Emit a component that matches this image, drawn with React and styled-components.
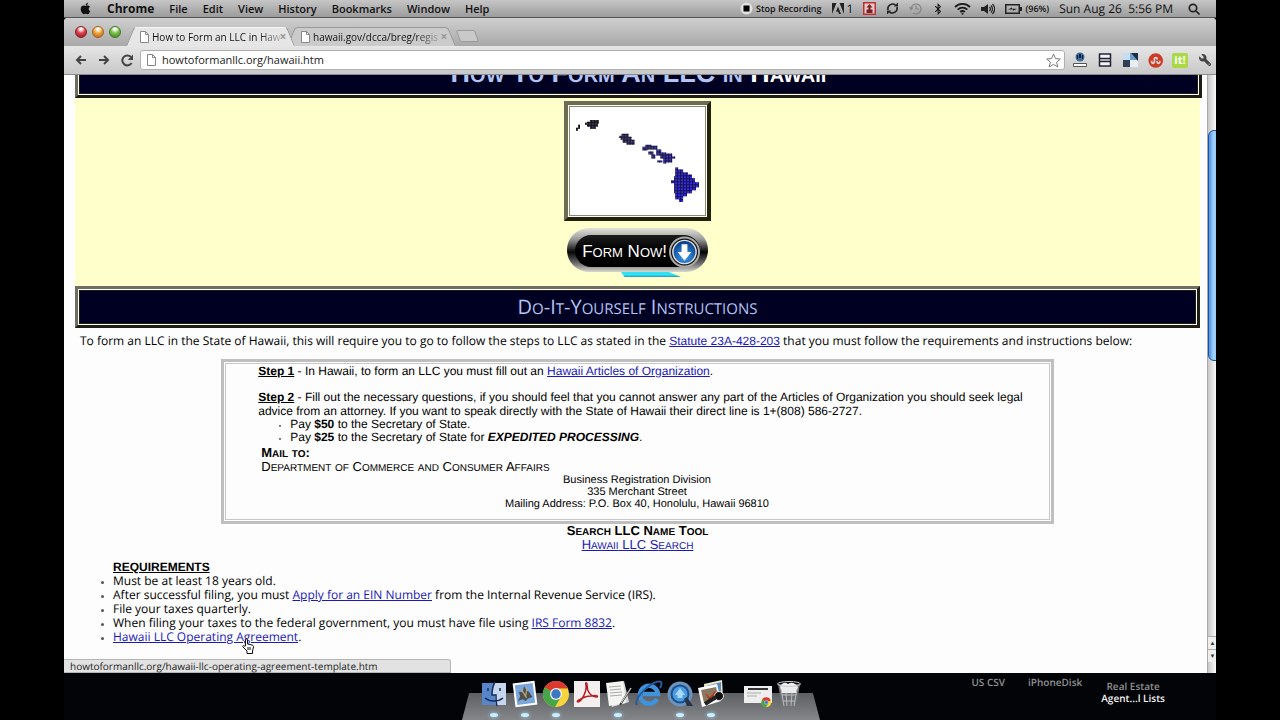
import React from 'react'
import styled, { createGlobalStyle } from 'styled-components'
import { FaApple, FaBluetoothB, FaStumbleuponCircle } from 'react-icons/fa'
import { FaWrench } from 'react-icons/fa6'

const SYSTEM_FONT = `'Open Sans', 'Noto Sans', sans-serif`
const PAGE_FONT = `'Open Sans', 'Noto Sans', sans-serif`
const ARIAL = `'Liberation Sans', Arial, sans-serif`

const GlobalStyle = createGlobalStyle`
    * { box-sizing: border-box; }
    body {
        margin: 0;
        background: #000;
        font-family: ${SYSTEM_FONT};
        font-size: 12px;
        text-rendering: geometricPrecision;
        overflow: hidden;
    }
    button, input { font: inherit; border: 0; background: none; padding: 0; color: inherit; }
    ul { margin: 0; padding: 0; }
    svg { display: block; flex-shrink: 0; }
`

const Screen = styled.div`
    display: flex;
    flex-direction: column;
    min-height: 100vh;
    margin: 0 5%;
`

/* ---- system menu bar ---- */

const MenuBar = styled.header`
    display: flex;
    align-items: center;
    justify-content: space-between;
    height: 18px;
    padding: 0 16px 0 15px;
    background: linear-gradient(#c6c6c6, #9c9c9c);
    border-bottom: 1px solid #555;
    color: #111;
`

const MenuList = styled.nav`
    display: flex;
    align-items: center;
    gap: 15px;
`

const MenuItem = styled.button`
    font-size: ${p => p.$bold ? 12 : 11}px;
    line-height: 16px;
    font-weight: ${p => p.$bold ? 700 : 600};
`

const StatusArea = styled.div`
    display: flex;
    align-items: center;
    gap: 10px;
`

const StatusItem = styled.div`
    display: flex;
    align-items: center;
    gap: 3px;
    font-size: ${p => p.$small ? 9 : 12}px;
    font-weight: ${p => p.$small ? 600 : 500};
    line-height: 16px;
    white-space: pre;
    &:last-child { margin-left: 5px; }
`

/* ---- browser window ---- */

const Window = styled.main`
    position: relative;
    display: flex;
    flex-direction: column;
    border-radius: 4px 4px 0 0;
    overflow: hidden;
    background: #fdfdfd;
`

const TabStrip = styled.div`
    display: flex;
    align-items: flex-end;
    height: 28px;
    padding-left: 11px;
    background: linear-gradient(#cfcfcf, #a9a9a9);
`

const Lights = styled.div`
    display: flex;
    gap: 5px;
    align-self: center;
    margin-right: 13px;
`

const Light = styled.button`
    width: 12px;
    height: 12px;
    border-radius: 50%;
    border: 1px solid ${p => p.$edge};
    background: radial-gradient(circle at 50% 20%, #fff 0 10%, ${p => p.$color} 45%, ${p => p.$edge});
`

const TabShell = styled.div`
    position: relative;
    z-index: ${p => p.$active ? 2 : 1};
    display: flex;
    align-items: center;
    width: 155px;
    height: 19px;
    margin-right: 6px;
    padding-left: 6px;
    &::before, &::after {
        content: '';
        position: absolute;
        z-index: -1;
        top: 0;
        bottom: 0;
        width: 60%;
        background: ${p => p.$active ? '#e6e6e6' : '#cbcbcb'};
        border-top: 1px solid ${p => p.$active ? '#f5f5f5' : '#999'};
    }
    &::before { left: -4px; transform: skewX(-22deg); border-left: 1px solid #8f8f8f; border-radius: 4px 0 0 0; }
    &::after { right: -2px; transform: skewX(22deg); border-right: 1px solid #8f8f8f; border-radius: 0 4px 0 0; }
`

const TabButton = styled.button`
    display: flex;
    align-items: center;
    gap: 3px;
    flex: 1;
    min-width: 0;
    text-align: left;
`

const TabTitle = styled.span`
    flex: 1;
    font-size: 10px;
    font-weight: 500;
    line-height: 16px;
    color: #111;
    white-space: nowrap;
    mask-image: linear-gradient(to right, #000 82%, rgba(0, 0, 0, .2));
`

const CloseButton = styled.button`
    flex: 0 0 12px;
    font-size: 12px;
    font-weight: 700;
    line-height: 12px;
    color: #999;
`

const NewTab = styled.button`
    width: 19px;
    height: 12px;
    margin: 0 0 4px 2px;
    border: 1px solid #9a9a9a;
    border-radius: 2px;
    background: #c9c9c9;
    transform: skewX(20deg);
`

const Toolbar = styled.div`
    display: flex;
    align-items: center;
    gap: 7px;
    height: 29px;
    padding: 0 3px 0 9px;
    background: linear-gradient(#e6e6e6, #c8c8c8);
    border-bottom: 1px solid #8c8c8c;
`

const IconButton = styled.button`
    display: flex;
    align-items: center;
    justify-content: center;
    width: 16px;
    height: 16px;
    color: #444;
`

const Omnibox = styled.label`
    display: flex;
    align-items: center;
    flex: 1;
    gap: 6px;
    height: 20px;
    margin-left: -2px;
    padding: 0 3px 0 6px;
    border: 1px solid #b0b0b0;
    border-radius: 3px;
    background: #fff;
`

const Address = styled.input`
    flex: 1;
    min-width: 0;
    font-size: 11px;
    font-weight: 500;
    line-height: 16px;
    color: #222;
    outline: none;
`

const Extensions = styled.div`
    display: flex;
    gap: 9px;
`

const Viewport = styled.div`
    display: flex;
`

/* ---- document ---- */

const Document = styled.article`
    flex: 1;
    padding: 0 7px 29px 11px;
    background: #fdfdfd;
    color: #000;
    font-family: ${PAGE_FONT};
`

const Banner = styled.div`
    display: flex;
    border: 3px solid;
    border-color: #6d6d63 #1d1d16 #1d1d16 #6d6d63;
    background: #fffff0;
    padding: 1px;
`

const BannerFill = styled.div`
    flex: 1;
    border: 1px solid #1d1d16;
    background: #000022;
    color: #b3c4f3;
    text-align: center;
`

const ScrolledBanner = styled.div`
    display: flex;
    flex-direction: column;
    justify-content: flex-end;
    height: 23px;
    margin-right: -2px;
    overflow: hidden;
`

const PageTitle = styled.h1`
    margin: 0;
    font-family: ${ARIAL};
    line-height: 36px;
    font-weight: 700;
    b { color: #fff; }
`

const SectionTitle = styled.h2`
    margin: 0;
    font-size: 20px;
    line-height: 32px;
    font-weight: 400;
`

/* small caps whose small letters are a size of their own */
const CapsText = styled.span`
    font-size: ${p => p.$big}px;
    text-transform: uppercase;
`

const SmallLetters = styled.span`
    font-size: ${p => p.$size}px;
    line-height: 1;
`

const SmallCaps = ({ big, small, children }) => (
    <CapsText $big={big}>
        {children.split(/([a-z]+)/).filter(Boolean).map((part, i) => (
            /[a-z]/.test(part) ? <SmallLetters key={i} $size={small}>{part}</SmallLetters> : part
        ))}
    </CapsText>
)

const Hero = styled.section`
    display: flex;
    flex-direction: column;
    align-items: center;
    gap: 7px;
    padding: 3px 0 8px;
    background: #ffffcb;
`

const MapFrame = styled.div`
    border: 4px solid;
    border-color: #6d6d55 #22220f #22220f #6d6d55;
    background: #fffff0;
    padding: 1px;
    svg { border: 1px solid #8a8a78; background: #fff; }
`

const FormNow = styled.button`
    position: relative;
    display: flex;
    align-items: center;
    justify-content: flex-end;
    gap: 2px;
    width: 141px;
    height: 44px;
    margin-bottom: 6px;
    padding: 3px 8px 0;
    border-radius: 22px;
    background: linear-gradient(#e4e4dc, #9b9b9b 25%, #050505 55%, #6a6a6a 80%, #d8d8d0);
    color: #fff;
    font-family: ${ARIAL};
    line-height: 24px;
    white-space: nowrap;
    > span { z-index: 1; }
    svg { z-index: 1; }
    &::before {
        content: '';
        position: absolute;
        inset: 7px 8px 5px;
        border-radius: 16px;
        background: linear-gradient(#1c1c1c, #000 50%);
    }
    &::after {
        content: '';
        position: absolute;
        left: 54px;
        top: 44px;
        width: 60px;
        height: 5px;
        background: linear-gradient(#31e2f7 60%, #2a8fb0);
        clip-path: polygon(0 0, 80% 0, 100% 100%, 6% 100%);
    }
`

const Link = styled.a`
    color: #1a1ab4;
    text-decoration: underline;
    ${p => p.$arial ? `font-family: ${ARIAL};` : ''}
`

const Intro = styled.p`
    margin: 5px 5px 10px;
    font-size: 12px;
    line-height: 16px;
`

const StepsBox = styled.section`
    width: 74%;
    margin: 0 auto;
    padding: 1px;
    border: 3px solid #bfbfbf;
`

const StepsInner = styled.div`
    padding: 0 33px 9px 32px;
    border: 1px solid #c8c8c8;
    font-family: ${ARIAL};
    font-size: 12px;
    line-height: 14px;
`

const Step = styled.p`
    margin: 0 -20px 12px 0;
    &:last-of-type { margin-bottom: 0; }
`

const StepName = styled.strong`
    text-decoration: underline;
`

const PayList = styled.ul`
    padding-left: 32px;
    margin-bottom: 2px;
    line-height: 13px;
    li::marker { font-size: 8px; color: #555; }
`

const MailTo = styled.div`
    padding-left: 3px;
`

const MailAddress = styled.address`
    font-style: normal;
    font-size: 11px;
    line-height: 12px;
    text-align: center;
`

const SearchTool = styled.section`
    font-family: ${ARIAL};
    font-size: 13px;
    line-height: 14px;
    text-align: center;
`

const Requirements = styled.section`
    padding: 8px 0 0 38px;
    font-size: 12px;
    line-height: 14px;
    h3 {
        margin: 0;
        font-family: ${ARIAL};
        font-size: 12px;
        text-decoration: underline;
    }
    li::marker { font-size: 8px; color: #555; }
`

const ScrollTrack = styled.div`
    display: flex;
    flex-direction: column;
    width: 9px;
    overflow: hidden;
    border-left: 1px solid #aaa;
    background: linear-gradient(to right, #c8c8c8, #fafafa);
`

const ScrollThumb = styled.div`
    flex: 0 0 231px;
    width: 14px;
    margin-top: 55px;
    border: 1px solid #1c4f9f;
    border-radius: 6px;
    background: linear-gradient(to right, #4f94e0, #a5d3fb 40%, #6eb2f2);
`

const ScrollArrows = styled.div`
    margin-top: auto;
    margin-bottom: 11px;
    background: #eee;
`

const ScrollArrow = styled.button`
    display: block;
    width: 9px;
    height: 13px;
    border-top: 1px solid #aaa;
    font-size: 6px;
    line-height: 12px;
    color: #333;
`

const StatusBubble = styled.div`
    position: absolute;
    left: 0;
    bottom: 0;
    width: 387px;
    height: 14px;
    padding-left: 6px;
    border: 1px solid #b5b5b5;
    border-left: 0;
    border-radius: 0 3px 0 0;
    background: #e2e2e2;
    color: #222;
    font-size: 10px;
    font-weight: 400;
    line-height: 12px;
`

const Pointer = styled.svg`
    position: absolute;
    left: 178px;
    bottom: 19px;
`

/* ---- dock and desktop ---- */

const Desktop = styled.footer`
    position: relative;
    flex: 1;
    min-height: 47px;
    background: #020407;
    overflow: hidden;
`

const Dock = styled.div`
    display: flex;
    align-items: flex-start;
    justify-content: center;
    width: 358px;
    height: 47px;
    margin-left: 398px;
    padding-top: 7px;
    background: linear-gradient(#5d5f62, #85878a) 0 20px / 100% 27px no-repeat;
    clip-path: polygon(0 0, 100% 0, 98% 42%, 100% 100%, 0 100%, 2% 42%);
`

const DockItem = styled.button`
    display: flex;
    flex-direction: column;
    align-items: center;
    width: 31px;
    margin-left: ${p => p.$gap ? 16 : 0}px;
    height: 40px;
    &::after {
        content: '';
        width: 8px;
        height: 4px;
        margin-top: 5px;
        border-radius: 50%;
        background: ${p => p.$running ? '#c9efff' : 'transparent'};
        box-shadow: ${p => p.$running ? '0 0 4px #a5dcfa' : 'none'};
    }
`

const DesktopLabels = styled.div`
    position: absolute;
    top: 3px;
    right: 51px;
    display: flex;
    gap: 23px;
`

const DesktopLabel = styled.div`
    padding-top: ${p => p.$low ? 4 : 0}px;
    margin-left: ${p => p.$low ? -4 : 0}px;
    color: #8f8f8f;
    font-size: 10px;
    font-weight: 600;
    line-height: 12px;
    text-align: center;
    b { color: #f2f2f2; font-weight: 600; }
`

/* ---- drawings ---- */

const PageIcon = () => (
    <svg width="9" height="12" viewBox="0 0 9 12" fill="#fff" stroke="#888">
        <path d="M.5.5h5l3 3v8h-8z" /><path d="M5.5.5v3h3" fill="none" />
    </svg>
)

const IslandMap = () => (
    <svg width="137" height="110" viewBox="0 0 136 109">
        <defs>
            <linearGradient id="sea" gradientUnits="userSpaceOnUse" x1="20" y1="10" x2="118" y2="82">
                <stop offset="0" stopColor="#333" />
                <stop offset=".5" stopColor="#4a4488" />
                <stop offset="1" stopColor="#352be8" />
            </linearGradient>
            <pattern id="grid" width="3" height="3" patternUnits="userSpaceOnUse">
                <path d="M0 .5h3M.5 0v3" stroke="#07071c" strokeWidth="1" opacity=".75" />
            </pattern>
        </defs>
        {['url(#sea)', 'url(#grid)'].map(fill => (
            <g key={fill} fill={fill}>
                <path d="M17 15h3v-2h9v4h-1v3h-2v2h-6v-2h-3v-2h-2v-2h2z" />
                <path d="M8 18h2v4h-2v2h-2v-3h2z" />
                <path d="M50 29h2v-2h7v3h3v3h3v5h-8v-2h-4v-3h-2v-2h-2z" />
                <path d="M73 40h3v-2h6v1h6v4h-10v1h-5z" />
                <path d="M79 45h5v3h2v4h-4v-4h-3z" />
                <path d="M87 43h5v3h5v1h6v3h3v2h-3v4h-6v1h-3v-5h-3v-3h-4z" />
                <path d="M88 54h5v2h-5z" />
                <path d="M106 61h3v2h5v3h5v2h4v4h3v4h4v5h-3v3h-4v3h-5v3h-4v6h-4v-3h-4v-6h-1v-10h-3v-3h3v-4h1z" />
            </g>
        ))}
    </svg>
)

const DownArrow = () => (
    <svg width="31" height="32" viewBox="0 0 32 32">
        <defs>
            <radialGradient id="ball" cx=".5" cy=".7" r=".7">
                <stop offset="0" stopColor="#3ba0f0" /><stop offset="1" stopColor="#07377f" />
            </radialGradient>
        </defs>
        <circle cx="16" cy="16" r="15" fill="#111" stroke="#aaa" strokeWidth="2" />
        <circle cx="16" cy="16" r="12" fill="url(#ball)" stroke="#e0e0e0" strokeWidth="1.5" />
        <path d="M13 8h6v8h4l-7 9-7-9h4z" fill="#fff" />
    </svg>
)

const ArrowIcon = ({ flip }) => (
    <svg width="12" height="12" viewBox="0 0 12 12" fill="none" stroke="#444" strokeWidth="2">
        <path d={flip ? 'M1 6h9M6 2l4 4-4 4' : 'M11 6H2M6 2L2 6l4 4'} />
    </svg>
)

const ReloadIcon = () => (
    <svg width="13" height="13" viewBox="0 0 13 13">
        <path d="M10.6 9A5 5 0 1 1 10 3" fill="none" stroke="#444" strokeWidth="2" />
        <path d="M12 .5V6H6.800z" fill="#444" />
    </svg>
)

const StarIcon = () => (
    <svg width="15" height="15" viewBox="0 0 15 15" fill="#fff" stroke="#777">
        <path d="M7.500 1l2 4.600 4.800.4-3.700 3.200 1.200 4.800-4.300-2.600L3.200 14l1.200-4.800L.7 6l4.800-.4z" />
    </svg>
)

const AdobeIcon = () => (
    <svg width="12" height="11" viewBox="0 0 12 11" fill="#222">
        <path d="M0 0h4.500L0 11zM7.500 0H12v11zM6 3.500L9 11H7L6.200 8.700H4z" />
    </svg>
)

const UploadIcon = () => (
    <svg width="13" height="13" viewBox="0 0 13 13">
        <rect x=".75" y=".75" width="11.500" height="11.500" fill="#e9c9c9" stroke="#bd3038" strokeWidth="1.500" />
        <path d="M6.500 2l3 3.500H7.500v2h2V11h-6V7.500h2v-2h-2z" fill="#722" />
    </svg>
)

const SyncIcon = () => (
    <svg width="13" height="13" viewBox="0 0 13 13">
        <path d="M2 8a4.800 4.800 0 0 1 7.500-5M11 5a4.800 4.800 0 0 1-7.500 5" fill="none" stroke="#222" strokeWidth="1.600" />
        <path d="M8 4.500h4V.5zM5 8.500H1v4z" fill="#222" />
    </svg>
)

const ClockIcon = () => (
    <svg width="13" height="13" viewBox="0 0 13 13" fill="none" stroke="#858585" strokeWidth="1.200">
        <path d="M2 7a5 5 0 1 1 2 4M.5 5L2 7.500 4 5.500M7 3.500V7h3" />
    </svg>
)

const WifiIcon = () => (
    <svg width="17" height="13" viewBox="0 0 17 13" fill="none" stroke="#1a1a1a" strokeWidth="1.800">
        <path d="M1 5a10.500 10.500 0 0 1 15 0M3.700 7.600a7 7 0 0 1 9.600 0M6.200 10a3.400 3.400 0 0 1 4.600 0" />
        <circle cx="8.500" cy="11.800" r="1" fill="#1a1a1a" stroke="none" />
    </svg>
)

const SpeakerIcon = () => (
    <svg width="14" height="12" viewBox="0 0 14 12" fill="none" stroke="#222" strokeWidth="1.200">
        <path d="M0 4h3l4-3v10L3 8H0z" fill="#222" stroke="none" />
        <path d="M8.500 4a3 3 0 0 1 0 4M10 2.500a5 5 0 0 1 0 7M11.500 1a7 7 0 0 1 0 10" />
    </svg>
)

const BatteryIcon = () => (
    <svg width="17" height="10" viewBox="0 0 17 10">
        <rect x=".75" y=".75" width="13.500" height="8.500" fill="none" stroke="#222" strokeWidth="1.500" />
        <path d="M15 3h2v4h-2zM3 5.500l4-2v1.200h5l-4 2V5.500z" fill="#222" />
    </svg>
)

const SearchIcon = () => (
    <svg width="12" height="12" viewBox="0 0 12 12" fill="none" stroke="#222" strokeWidth="1.700">
        <circle cx="5" cy="5" r="3.700" /><path d="M8 8l3.500 3.500" />
    </svg>
)

const StopIcon = () => (
    <svg width="13" height="13" viewBox="0 0 13 13">
        <circle cx="6.500" cy="6.500" r="6" fill="#e1e1e1" /><path d="M3.500 3.500h6v6h-6z" />
    </svg>
)

const ProxyIcon = () => (
    <svg width="16" height="16" viewBox="0 0 16 16">
        <circle cx="8" cy="5" r="4.500" fill="#3e6f9a" /><path d="M7 2h2v4H7zM5 3h1v4H5zM10 3h1v4h-1z" fill="#0c1d38" />
        <path d="M1.500 11.500h13v3h-13z" fill="#fff" stroke="#555" />
    </svg>
)

const PanelsIcon = () => (
    <svg width="14" height="14" viewBox="0 0 14 14" fill="#f4f4f4" stroke="#22243a" strokeWidth="1.300">
        <path d="M1.500 1h11v4.500h-11zM1.500 8.500h11V13h-11z" /><path d="M1.500 1v12M12.500 1v12" />
    </svg>
)

const SquaresIcon = () => (
    <svg width="15" height="14" viewBox="0 0 15 14">
        <path d="M0 0h7v7H0z" fill="#c3ddf2" /><path d="M7 0h8v7H7z" fill="#6d9cc8" />
        <path d="M0 7h7v7H0z" fill="#2c4058" /><path d="M7 7h8v7H7z" fill="#e8eef4" /><path d="M8 0h7v8z" fill="#1c2d48" />
    </svg>
)

const Badge = styled.span`
    width: 16px;
    height: 15px;
    border-radius: 2px;
    background: #a9da45;
    color: #fff;
    font-size: 11px;
    font-weight: 700;
    line-height: 14px;
`

const ICON = { width: 28, height: 28, viewBox: '0 0 28 28' }

const FinderIcon = () => (
    <svg {...ICON}>
        <path d="M2 3h24v22H2z" fill="#c5d6ee" /><path d="M2 3h13c-3 5-3 9-3 12h3c0 4 0 7 1 10H2z" fill="#5685ca" />
        <path d="M15 2c-3 5-3 9-3 13h4c0 5 0 8 1 11M5 18c5 4 13 4 18 0M8 8v3M20 8v3" fill="none" stroke="#182c58" strokeWidth="1.500" />
    </svg>
)

const MailIcon = () => (
    <svg {...ICON}>
        <g transform="rotate(-7 14 14)">
            <path d="M3 2h22v24H3z" fill="#fff" /><path d="M5 4h18v20H5z" fill="#7ba6dc" />
            <path d="M8 11l4 1 2-6 2 5 2 1 3 6-5 1-2 2-3-2-5 1 3-4z" fill="#4c4f4c" /><path d="M11 9l4 9M17 8l-3 9" stroke="#b7a578" strokeWidth="1.300" />
        </g>
    </svg>
)

const ChromeIcon = () => (
    <svg {...ICON}>
        <circle cx="14" cy="14" r="13" fill="#f9d43d" />
        <path d="M14 14L2.700 7.500A13 13 0 0 1 25.800 8.500H14z" fill="#d93a2d" />
        <path d="M2.700 7.500A13 13 0 0 0 13 27l6-10-5-3z" fill="#46a548" />
        <circle cx="14" cy="14" r="6" fill="#f0f0f0" /><circle cx="14" cy="14" r="4.700" fill="#3b78c4" />
    </svg>
)

const PdfIcon = () => (
    <svg {...ICON}>
        <path d="M1 1h26v26H1z" fill="#f4efef" />
        <path d="M5 22c4-1 9-11 8-17-1-3 1-3 1 0 0 7 4 12 10 12 2-1-2-2-6-1-5 0-9 2-12 4-2 1-2 2-1 2z" fill="none" stroke="#b52025" strokeWidth="1.500" />
    </svg>
)

const TextEditIcon = () => (
    <svg {...ICON}>
        <path d="M3 5l17-4 5 21-17 5z" fill="#d7d7d7" /><path d="M2 3l17-2 3 22-17 3z" fill="#f5f5f2" />
        <path d="M5 7l12-1M6 10l11-1M6 13l12-1M6 16l12-1" stroke="#aaa" /><path d="M27 8L16 25" stroke="#444" strokeWidth="2" /><path d="M27 8L17 23" stroke="#ddd" />
    </svg>
)

const ExplorerIcon = () => (
    <svg {...ICON}>
        <path d="M22 19a9 9 0 1 1 1-5H8" fill="none" stroke="#3e93dc" strokeWidth="4.500" />
        <path d="M2 25C-3 18 20-2 26 2c1 1 0 4-1 6" fill="none" stroke="#275b9e" strokeWidth="2" />
    </svg>
)

const QuickTimeIcon = () => (
    <svg {...ICON}>
        <circle cx="14" cy="14" r="12.500" fill="#6c93bb" /><circle cx="14" cy="14" r="9.500" fill="#1c4f8e" />
        <circle cx="14" cy="14" r="7.500" fill="#4a9be0" /><path d="M14 8l5 7h-2.500v3h-5v-3H9z" fill="#a9d8fa" />
        <path d="M18 19l3-2 6 9h-6z" fill="#26354a" />
    </svg>
)

const PhotosIcon = () => (
    <svg {...ICON}>
        <path d="M7 4l18-4 1 17-18 3z" fill="#f0ead0" /><path d="M9 6l15-4v9L10 14z" fill="#5a8cc4" />
        <path d="M1 8l19-4 4 17L5 27z" fill="#fff" /><path d="M4 10l15-3 3 12-15 4z" fill="#8c775f" />
        <path d="M8 13l5 4 5-6 3 6-8 5z" fill="#b33a2a" /><circle cx="22" cy="16" r="4.500" fill="#111" stroke="#ddd" /><path d="M8 24l11-7" stroke="#222" strokeWidth="4" />
    </svg>
)

const MinimizedIcon = () => (
    <svg {...ICON}>
        <path d="M0 6h28v17H0z" fill="#eee" /><path d="M4 9h20" stroke="#333" strokeWidth="2" /><path d="M3 13h14M3 16h10" stroke="#aaa" />
        <g transform="translate(17 17) scale(.38)">
            <circle cx="14" cy="14" r="13" fill="#f9d43d" /><path d="M14 14L2.700 7.500A13 13 0 0 1 25.800 8.500z" fill="#d93a2d" />
            <path d="M2.700 7.500A13 13 0 0 0 13 27l6-10z" fill="#46a548" /><circle cx="14" cy="14" r="5" fill="#3b78c4" stroke="#fff" />
        </g>
    </svg>
)

const TrashIcon = () => (
    <svg {...ICON}>
        <path d="M3 4h22l-4 23H7z" fill="#6f7276" /><path d="M5 7c2-5 6-5 8-3 4-3 8 0 10 3l-2 6H7z" fill="#ececec" />
        <path d="M6 9l3 17M11 13l1 13M17 13l-1 13M22 9l-3 17M7 15h14M8 21h12" stroke="#bcbcbc" fill="none" /><ellipse cx="14" cy="4" rx="11.500" ry="2.500" fill="none" stroke="#ccc" />
    </svg>
)

const menus = ['File', 'Edit', 'View', 'History', 'Bookmarks', 'Window', 'Help']

const tabs = [
    { title: 'How to Form an LLC in Haw', active: true },
    { title: 'hawaii.gov/dcca/breg/regis', active: false },
]

const dockItems = [
    { name: 'Finder', Icon: FinderIcon, running: true },
    { name: 'Mail', Icon: MailIcon, running: true },
    { name: 'Chrome', Icon: ChromeIcon, running: true },
    { name: 'Reader', Icon: PdfIcon },
    { name: 'TextEdit', Icon: TextEditIcon, running: true },
    { name: 'Explorer', Icon: ExplorerIcon },
    { name: 'QuickTime', Icon: QuickTimeIcon, running: true },
    { name: 'Photos', Icon: PhotosIcon, running: true },
    { name: 'Minimized window', Icon: MinimizedIcon, gap: true },
    { name: 'Trash', Icon: TrashIcon },
]

const SystemMenu = () => (
    <MenuBar>
        <MenuList>
            <MenuItem aria-label="Apple"><FaApple size={13} /></MenuItem>
            <MenuItem $bold>Chrome</MenuItem>
            {menus.map(m => <MenuItem key={m}>{m}</MenuItem>)}
        </MenuList>
        <StatusArea>
            <StatusItem $small><StopIcon />Stop Recording</StatusItem>
            <StatusItem><AdobeIcon />1</StatusItem>
            <StatusItem><UploadIcon /></StatusItem>
            <StatusItem><SyncIcon /></StatusItem>
            <StatusItem><ClockIcon /></StatusItem>
            <StatusItem><FaBluetoothB size={12} /></StatusItem>
            <StatusItem><WifiIcon /></StatusItem>
            <StatusItem><SpeakerIcon /></StatusItem>
            <StatusItem $small><BatteryIcon />(96%)</StatusItem>
            <StatusItem>{'Sun Aug 26  5:56 PM'}</StatusItem>
            <StatusItem><SearchIcon /></StatusItem>
        </StatusArea>
    </MenuBar>
)

const BrowserChrome = () => (
    <>
        <TabStrip>
            <Lights>
                <Light aria-label="Close" $color="#e0404a" $edge="#8c1a26" />
                <Light aria-label="Minimize" $color="#f5a53a" $edge="#a5611a" />
                <Light aria-label="Zoom" $color="#7cc24a" $edge="#3d7a20" />
            </Lights>
            {tabs.map(tab => (
                <TabShell key={tab.title} $active={tab.active}>
                    <TabButton><PageIcon /><TabTitle>{tab.title}</TabTitle></TabButton>
                    <CloseButton aria-label="Close tab">×</CloseButton>
                </TabShell>
            ))}
            <NewTab aria-label="New tab" />
        </TabStrip>
        <Toolbar>
            <IconButton aria-label="Back"><ArrowIcon /></IconButton>
            <IconButton aria-label="Forward"><ArrowIcon flip /></IconButton>
            <IconButton aria-label="Reload"><ReloadIcon /></IconButton>
            <Omnibox>
                <PageIcon />
                <Address aria-label="Address" defaultValue="howtoformanllc.org/hawaii.htm" />
                <StarIcon />
            </Omnibox>
            <Extensions>
                <IconButton aria-label="Proxy"><ProxyIcon /></IconButton>
                <IconButton aria-label="Panels"><PanelsIcon /></IconButton>
                <IconButton aria-label="Squares"><SquaresIcon /></IconButton>
                <IconButton aria-label="StumbleUpon"><FaStumbleuponCircle size={15} color="#cf3a25" /></IconButton>
                <IconButton aria-label="It"><Badge>it!</Badge></IconButton>
                <IconButton aria-label="Settings"><FaWrench size={12} transform="scale(-1 1)" /></IconButton>
            </Extensions>
        </Toolbar>
    </>
)

const HawaiiPage = () => (
    <Document>
        <ScrolledBanner>
            <Banner>
                <BannerFill>
                    <PageTitle>
                        <SmallCaps big={27} small={20}>How To Form An LLC in </SmallCaps>
                        <b><SmallCaps big={27} small={20}>Hawaii</SmallCaps></b>
                    </PageTitle>
                </BannerFill>
            </Banner>
        </ScrolledBanner>
        <Hero>
            <MapFrame><IslandMap /></MapFrame>
            <FormNow><SmallCaps big={17} small={13}>Form Now!</SmallCaps><DownArrow /></FormNow>
        </Hero>
        <Banner>
            <BannerFill><SectionTitle><SmallCaps big={20} small={15}>Do-It-Yourself Instructions</SmallCaps></SectionTitle></BannerFill>
        </Banner>
        <Intro>
            To form an LLC in the State of Hawaii, this will require you to go to follow the steps to LLC as stated in the{' '}
            <Link $arial href="#statute">Statute 23A-428-203</Link> that you must follow the requirements and instructions below:
        </Intro>
        <StepsBox>
            <StepsInner>
                <Step>
                    <StepName>Step 1</StepName> - In Hawaii, to form an LLC you must fill out an <Link href="#articles">Hawaii Articles of Organization</Link>.
                </Step>
                <Step>
                    <StepName>Step 2</StepName> - Fill out the necessary questions, if you should feel that you cannot answer any part of the Articles of
                    Organization you should seek legal advice from an attorney. If you want to speak directly with the State of Hawaii their direct line is 1+(808) 586-2727.
                </Step>
                <PayList>
                    <li>Pay <b>$50</b> to the Secretary of State.</li>
                    <li>Pay <b>$25</b> to the Secretary of State for <b><i>EXPEDITED PROCESSING</i></b>.</li>
                </PayList>
                <MailTo><b><SmallCaps big={13} small={10}>Mail to:</SmallCaps></b></MailTo>
                <MailTo><SmallCaps big={13} small={10}>Department of Commerce and Consumer Affairs</SmallCaps></MailTo>
                <MailAddress>
                    Business Registration Division<br />
                    335 Merchant Street<br />
                    Mailing Address: P.O. Box 40, Honolulu, Hawaii 96810
                </MailAddress>
            </StepsInner>
        </StepsBox>
        <SearchTool>
            <b><SmallCaps big={13} small={10}>Search LLC Name Tool</SmallCaps></b><br />
            <Link href="#search"><SmallCaps big={13} small={10}>Hawaii LLC Search</SmallCaps></Link>
        </SearchTool>
        <Requirements>
            <h3>REQUIREMENTS</h3>
            <ul>
                <li>Must be at least 18 years old.</li>
                <li>After successful filing, you must <Link href="#ein">Apply for an EIN Number</Link> from the Internal Revenue Service (IRS).</li>
                <li>File your taxes quarterly.</li>
                <li>When filing your taxes to the federal government, you must have file using <Link href="#8832">IRS Form 8832</Link>.</li>
                <li><Link href="#agreement">Hawaii LLC Operating Agreement</Link>.</li>
            </ul>
        </Requirements>
    </Document>
)

const App = () => {
    return (
        <>
            <GlobalStyle />
            <Screen>
                <SystemMenu />
                <Window>
                    <BrowserChrome />
                    <Viewport>
                        <HawaiiPage />
                        <ScrollTrack>
                            <ScrollThumb />
                            <ScrollArrows>
                                <ScrollArrow aria-label="Scroll up">▲</ScrollArrow>
                                <ScrollArrow aria-label="Scroll down">▼</ScrollArrow>
                            </ScrollArrows>
                        </ScrollTrack>
                    </Viewport>
                    <StatusBubble>howtoformanllc.org/hawaii-llc-operating-agreement-template.htm</StatusBubble>
                    <Pointer width="12" height="16" viewBox="0 0 12 16" fill="#fff" stroke="#111">
                        <path d="M3.500 8V2c0-1.500 2-1.500 2 0v4l4.500 1c1 .3 1.500 1 1.500 2l-1 4v2.500H5V13L1 9c-.8-1.200.5-2 1.500-1z" />
                        <path d="M6 9v3M8 9v3" />
                    </Pointer>
                </Window>
                <Desktop>
                    <Dock>
                        {dockItems.map(({ name, Icon, running, gap }) => (
                            <DockItem key={name} aria-label={name} $running={running} $gap={gap}><Icon /></DockItem>
                        ))}
                    </Dock>
                    <DesktopLabels>
                        <DesktopLabel>US CSV</DesktopLabel>
                        <DesktopLabel>iPhoneDisk</DesktopLabel>
                        <DesktopLabel $low>Real Estate<br /><b>Agent...l Lists</b></DesktopLabel>
                    </DesktopLabels>
                </Desktop>
            </Screen>
        </>
    )
}

export default App
